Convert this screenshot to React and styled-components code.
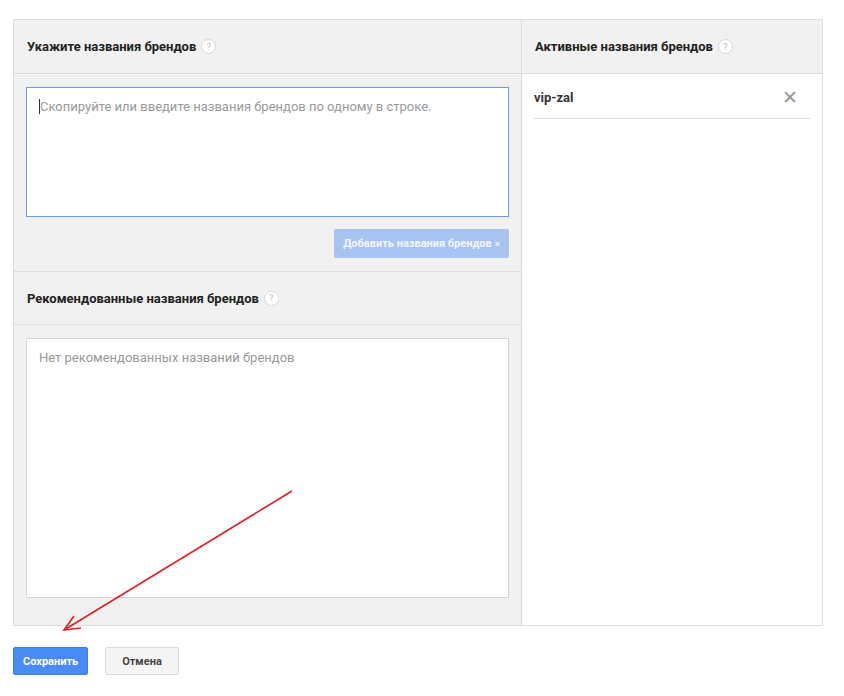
import styled, { createGlobalStyle } from "styled-components";

const Global = createGlobalStyle`
  body { margin: 0; background: #fff; font-family: Roboto, Arial, sans-serif; }
`;

const Page = styled.div`
  position: relative;
  width: 844px;
  height: 696px;
  padding: 19px 21px 0 13px;
  box-sizing: border-box;
`;

const Panel = styled.div`
  display: grid;
  grid-template-columns: 507px 1fr;
  height: 607px;
  border: 1px solid #dcdcdc;
  box-sizing: border-box;
  background: #f1f1f1;
`;

const Column = styled.div`
  display: flex;
  flex-direction: column;
  background: ${(p) => (p.white ? "#fff" : "#f1f1f1")};
  border-left: ${(p) => (p.white ? "1px solid #dcdcdc" : "0")};
`;

const Header = styled.div`
  height: 54px;
  display: flex;
  align-items: center;
  padding: 0 13px;
  font-size: 13px;
  font-weight: bold;
  color: #222;
  background: #f1f1f1;
  border-bottom: 1px solid #dcdcdc;
  border-top: ${(p) => (p.divided ? "1px solid #dcdcdc" : "0")};
  box-sizing: border-box;
`;

const Help = styled.span`
  display: inline-flex;
  align-items: center;
  justify-content: center;
  width: 13px;
  height: 13px;
  margin-left: 5px;
  border-radius: 50%;
  border: 1px solid #d8d8d8;
  background: #fff;
  color: #bbb;
  font-size: 9px;
  font-weight: normal;
`;

const Body = styled.div`
  padding: 13px 12px ${(p) => p.bottom || 13}px;
  display: flex;
  flex-direction: column;
  flex: ${(p) => (p.grow ? 1 : "none")};
`;

const TextBox = styled.div`
  height: ${(p) => p.h}px;
  flex: ${(p) => (p.grow ? 1 : "none")};
  background: #fff;
  border: 1px solid ${(p) => (p.focused ? "#6d9ae6" : "#d6d6d6")};
  box-sizing: border-box;
  padding: 11px 12px;
  font-size: 13px;
  color: #999;
  ${(p) => p.focused && "border-left: 1px solid #6d9ae6;"}
`;

const Caret = styled.span`
  display: inline-block;
  width: 1px;
  height: 15px;
  background: #333;
  vertical-align: -3px;
  margin-right: 0;
`;

const ButtonRow = styled.div`
  display: flex;
  justify-content: flex-end;
  margin-top: 12px;
`;

const AddButton = styled.div`
  height: 29px;
  padding: 0 9px;
  display: flex;
  align-items: center;
  background: #a7c3f2;
  color: #f2f6fd;
  font-size: 11px;
  font-weight: bold;
  border-radius: 2px;
`;

const Item = styled.div`
  margin: 0 12px;
  height: 42px;
  display: flex;
  align-items: center;
  justify-content: space-between;
  border-bottom: 1px solid #dcdcdc;
  font-size: 13px;
  font-weight: bold;
  color: #333;
  padding-top: 2px;
`;

const Close = styled.span`
  color: #999;
  font-size: 19px;
  font-weight: normal;
  margin-right: 12px;
`;

const Footer = styled.div`
  display: flex;
  gap: 17px;
  margin-top: 21px;
`;

const Btn = styled.div`
  height: 28px;
  padding: 0 ${(p) => (p.primary ? 9 : 16)}px;
  display: flex;
  align-items: center;
  font-size: 11px;
  font-weight: bold;
  border-radius: 2px;
  box-sizing: border-box;
  background: ${(p) => (p.primary ? "#4a8af4" : "#f5f5f5")};
  color: ${(p) => (p.primary ? "#fff" : "#444")};
  border: 1px solid ${(p) => (p.primary ? "#3b7de9" : "#dcdcdc")};
`;

const Arrow = styled.svg`
  position: absolute;
  left: 0;
  top: 0;
  pointer-events: none;
`;

export default function App() {
  return (
    <Page>
      <Global />
      <Panel>
        <Column>
          <Header>Укажите названия брендов<Help>?</Help></Header>
          <Body>
            <TextBox h={130} focused>
              <Caret />Скопируйте или введите названия брендов по одному в строке.
            </TextBox>
            <ButtonRow>
              <AddButton>Добавить названия брендов »</AddButton>
            </ButtonRow>
          </Body>
          <Header divided>Рекомендованные названия брендов<Help>?</Help></Header>
          <Body grow bottom={27}>
            <TextBox grow>Нет рекомендованных названий брендов</TextBox>
          </Body>
        </Column>
        <Column white>
          <Header>Активные названия брендов<Help>?</Help></Header>
          <Item>vip-zal<Close>✕</Close></Item>
        </Column>
      </Panel>
      <Footer>
        <Btn primary>Сохранить</Btn>
        <Btn>Отмена</Btn>
      </Footer>
      <Arrow width="844" height="696">
        <line x1="292" y1="491" x2="64" y2="630" stroke="#e02020" strokeWidth="1.6" />
        <polyline points="74,616 64,630 81,628" fill="none" stroke="#e02020" strokeWidth="1.6" />
      </Arrow>
    </Page>
  );
}
